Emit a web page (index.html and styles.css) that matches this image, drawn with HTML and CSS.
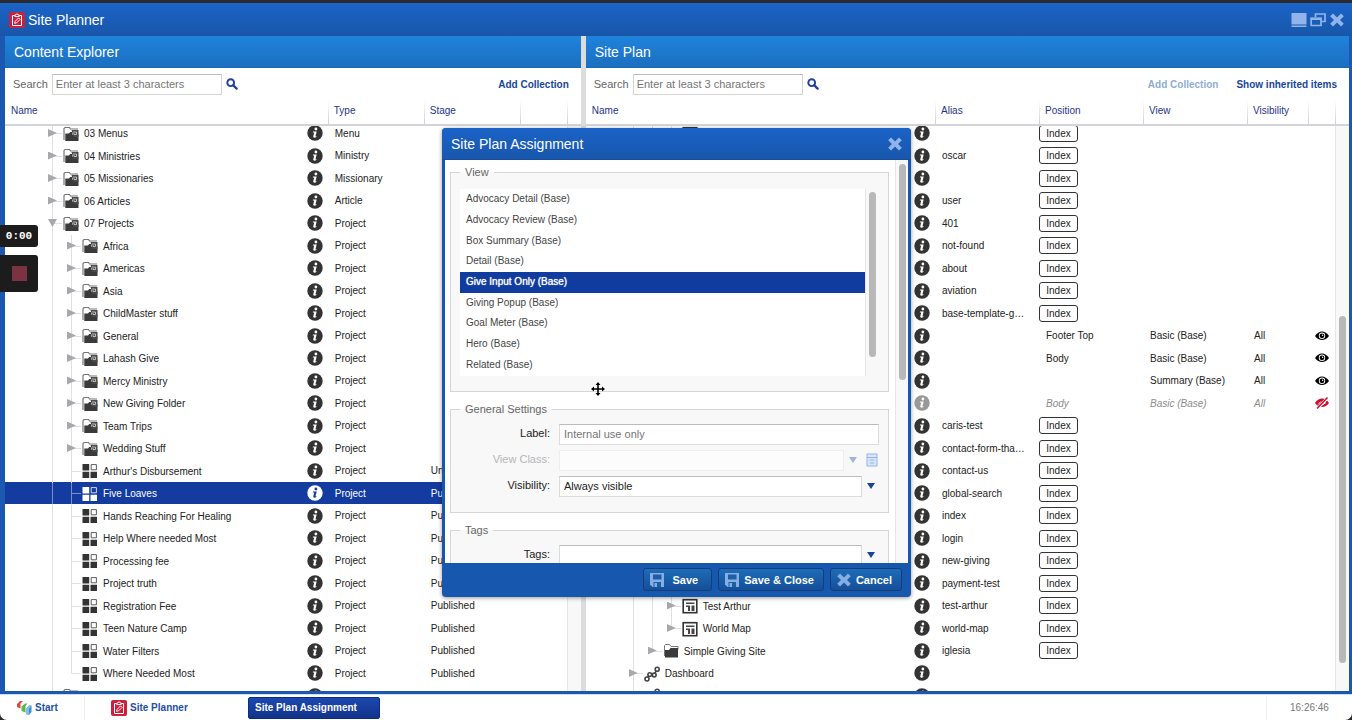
FILE: index.html
```
<!DOCTYPE html>
<html lang="en">
<head>
    <meta charset="UTF-8">
    <meta name="viewport" content="width=device-width, initial-scale=1.0">
    <title>Site Planner</title>
    <link rel="stylesheet" href="styles.css">
</head>
<body>
    <svg class="sprite" aria-hidden="true">
        <symbol id="planner" viewBox="0 0 16 16">
            <rect width="16" height="16" rx="2" fill="#c9203c"/>
            <path d="M5.5 3.5h-2v10h9v-10h-2M5.8 4.6V3h1.1a1.1 1.1 0 0 1 2.2 0h1.1v1.6z" fill="none" stroke="#fff"/>
            <path d="M5.6 11.3l.6-2 3.4-3.4 1.5 1.5-3.4 3.4z" fill="none" stroke="#fff" stroke-width=".9"/>
        </symbol>
        <symbol id="close" viewBox="0 0 16 16">
            <path d="M4 1.5L8 5.4l4-3.9L14.8 4.3 11 8l3.8 3.7L12 14.500 8 10.6l-4 3.900-2.800-2.800L5 8 1.200 4.300z" fill="currentColor"/>
        </symbol>
        <symbol id="minimize" viewBox="0 0 16 16">
            <path d="M.5 1h15v11.500H.5zM.5 13.500h15V15H.5z" fill="currentColor"/>
        </symbol>
        <symbol id="restore" viewBox="0 0 16 16">
            <path d="M5.500 5V2H15v7.500h-3.500M1.200 6.500h9.800v7H1.200z" fill="none" stroke="currentColor" stroke-width="1.700"/>
            <path d="M.5 5.500h11.300v2.500H.5z" fill="currentColor"/>
        </symbol>
        <symbol id="search" viewBox="0 0 12 12">
            <circle cx="4.700" cy="4.700" r="3.400" fill="none" stroke="currentColor" stroke-width="1.900"/>
            <path d="M7.200 7.200l3.400 3.400" stroke="currentColor" stroke-width="2.300" stroke-linecap="round"/>
        </symbol>
        <symbol id="info" viewBox="0 0 16 16">
            <circle cx="8" cy="8" r="7.700" fill="currentColor"/>
            <circle class="glyph" cx="8.900" cy="4" r="1.400"/>
            <path class="glyph" d="M6 6.500h3.700l-1.300 5 1.100-.400-.200.900c-1 .900-3.400 1.200-3-.700l.900-3.700-1.400-.200z"/>
        </symbol>
        <symbol id="folder" viewBox="0 0 16 16">
            <path d="M1.500 13V2.500L2.500 1.500h4l1.500 2h7v3" fill="none" stroke="#777"/>
            <path d="M2 7h4l1.500-2H15v9.500H2z" fill="#3a3a3a"/>
        </symbol>
        <symbol id="collection" viewBox="0 0 16 16">
            <path d="M1 14V2.500L2 1.500h4.500l1 1.500H15" fill="none" stroke="#777" stroke-width="1.200"/>
            <path d="M2.300 7.500H6L7.200 6H9v2.500h6.500V15H2.300z" fill="#3a3a3a"/>
            <path d="M8.500 4h7v7h-5z" fill="#4a4a4a"/>
            <path d="M11 5v3.500h2.500V6H12" fill="none" stroke="#d8d8d8" stroke-width=".8"/>
        </symbol>
        <symbol id="item" viewBox="0 0 16 16">
            <path d="M.5 1h6.700v6.500H.5zM.5 8.700h6.700V15H.5zM8.500 8.700H15V15H8.500z" fill="currentColor"/>
            <path class="item-slot" d="M9.200 1.600h5.200v5.200H9.200z" stroke="currentColor" stroke-width=".8"/>
        </symbol>
        <symbol id="page" viewBox="0 0 16 16">
            <rect x="1.200" y="1.700" width="13.600" height="13" fill="#fff" stroke="#333" stroke-width="1.600"/>
            <path d="M4 4.500h8.500V6H4zM4 7.500h4V9H4zM6 9h2v4H6zM9.500 7.500h3V13h-3z" fill="#444"/>
        </symbol>
        <symbol id="dashboard" viewBox="0 0 16 16">
            <path d="M3 12.500L5.500 8.500 10 9l3-5.500" fill="none" stroke="#444" stroke-width="1.600"/>
            <g fill="#fff" stroke="#444" stroke-width="1.600">
                <circle cx="3" cy="13" r="2"/><circle cx="5.800" cy="8.600" r="1.900"/>
                <circle cx="10.200" cy="9" r="1.900"/><circle cx="13.200" cy="3.200" r="2"/>
            </g>
        </symbol>
        <symbol id="eye" viewBox="0 0 16 16">
            <path d="M1 8c3.600-6 10.400-6 14 0-3.600 5.400-10.400 5.400-14 0z" fill="#000"/>
            <circle cx="8" cy="7.800" r="3.200" fill="#fff"/>
            <circle cx="8" cy="7.800" r="2.400" fill="#000"/>
            <circle cx="8.600" cy="7.200" r=".7" fill="#fff"/>
        </symbol>
        <symbol id="eye-off" viewBox="0 0 16 16">
            <path d="M1 8c3.600-6 10.400-6 14 0-3.600 5.400-10.400 5.400-14 0z" fill="#c8102e"/>
            <path d="M4 9.500l3-3M9 9.500l3-2" stroke="#fff"/>
            <path d="M3.500 13.500L14 2.500" stroke="#fff" stroke-width="3"/>
            <path d="M3 13.500L13.500 2.500" stroke="#c8102e" stroke-width="1.500"/>
        </symbol>
        <symbol id="disk" viewBox="0 0 16 16">
            <path d="M1 1h14v14H3.500L1 12.500z" fill="currentColor"/>
            <path d="M4 2.500h8.500v5H4zM4.500 10h7.500v5H4.500z" fill="#1b5fa6"/>
            <path d="M5.500 11h2.500v4H5.500z" fill="currentColor"/>
        </symbol>
        <symbol id="start" viewBox="0 0 16 16">
            <path d="M1 4l3-3h3L4.500 3.500v5L1 7z" fill="#e0483e"/>
            <path d="M5.500 6.500L9 3.500h2.500L9.500 6v6.500l-4-1.500z" fill="#5cb947"/>
            <path d="M10 9l3-3.500h2.500V12L13 15l-3-1z" fill="#3d8fd6"/>
            <path d="M10 9l3-3.500h2.500L13 8.500V15l-3-1z" fill="#7fc1ee"/>
        </symbol>
    </svg>

    <div class="screen">
        <main class="window">
            <header class="titlebar">
                <svg class="app-icon"><use href="#planner"/></svg>
                <h1>Site Planner</h1>
                <div class="window-tools">
                    <button aria-label="Minimize"><svg class="icon"><use href="#minimize"/></svg></button>
                    <button aria-label="Restore"><svg class="icon"><use href="#restore"/></svg></button>
                    <button aria-label="Close"><svg class="icon"><use href="#close"/></svg></button>
                </div>
            </header>

            <div class="panels">
                <section class="panel panel-explorer">
                    <h2>Content Explorer</h2>
                    <form class="toolbar">
                        <label for="search-content">Search</label>
                        <input id="search-content" type="text" placeholder="Enter at least 3 characters">
                        <button type="button" class="search-button" aria-label="Search"><svg><use href="#search"/></svg></button>
                        <a class="action" href="#">Add Collection</a>
                    </form>
                    <table class="grid grid-head">
                        <colgroup><col><col class="col-info"><col class="col-type"><col class="col-stage"><col class="col-extra"><col class="col-scroll"></colgroup>
                        <thead>
                            <tr><th colspan="2">Name</th><th>Type</th><th>Stage</th><th></th><th></th></tr>
                        </thead>
                    </table>
                    <div class="grid-body">
                        <div class="grid-clip">
                            <table class="grid">
                                <colgroup><col><col class="col-info"><col class="col-type"><col class="col-stage"><col class="col-extra"></colgroup>
                                <tbody>
                                    <tr><td><div class="node"><button class="guide closed" aria-label="Expand"></button><svg class="icon"><use href="#collection"/></svg>03 Menus</div></td><td><svg class="icon"><use href="#info"/></svg></td><td>Menu</td><td></td><td></td></tr>
                                    <tr><td><div class="node"><button class="guide closed" aria-label="Expand"></button><svg class="icon"><use href="#collection"/></svg>04 Ministries</div></td><td><svg class="icon"><use href="#info"/></svg></td><td>Ministry</td><td></td><td></td></tr>
                                    <tr><td><div class="node"><button class="guide closed" aria-label="Expand"></button><svg class="icon"><use href="#collection"/></svg>05 Missionaries</div></td><td><svg class="icon"><use href="#info"/></svg></td><td>Missionary</td><td></td><td></td></tr>
                                    <tr><td><div class="node"><button class="guide closed" aria-label="Expand"></button><svg class="icon"><use href="#collection"/></svg>06 Articles</div></td><td><svg class="icon"><use href="#info"/></svg></td><td>Article</td><td></td><td></td></tr>
                                    <tr><td><div class="node"><button class="guide open" aria-label="Collapse"></button><svg class="icon"><use href="#collection"/></svg>07 Projects</div></td><td><svg class="icon"><use href="#info"/></svg></td><td>Project</td><td></td><td></td></tr>
                                    <tr><td><div class="node"><span class="guide"></span><button class="guide closed" aria-label="Expand"></button><svg class="icon"><use href="#collection"/></svg>Africa</div></td><td><svg class="icon"><use href="#info"/></svg></td><td>Project</td><td></td><td></td></tr>
                                    <tr><td><div class="node"><span class="guide"></span><button class="guide closed" aria-label="Expand"></button><svg class="icon"><use href="#collection"/></svg>Americas</div></td><td><svg class="icon"><use href="#info"/></svg></td><td>Project</td><td></td><td></td></tr>
                                    <tr><td><div class="node"><span class="guide"></span><button class="guide closed" aria-label="Expand"></button><svg class="icon"><use href="#collection"/></svg>Asia</div></td><td><svg class="icon"><use href="#info"/></svg></td><td>Project</td><td></td><td></td></tr>
                                    <tr><td><div class="node"><span class="guide"></span><button class="guide closed" aria-label="Expand"></button><svg class="icon"><use href="#collection"/></svg>ChildMaster stuff</div></td><td><svg class="icon"><use href="#info"/></svg></td><td>Project</td><td></td><td></td></tr>
                                    <tr><td><div class="node"><span class="guide"></span><button class="guide closed" aria-label="Expand"></button><svg class="icon"><use href="#collection"/></svg>General</div></td><td><svg class="icon"><use href="#info"/></svg></td><td>Project</td><td></td><td></td></tr>
                                    <tr><td><div class="node"><span class="guide"></span><button class="guide closed" aria-label="Expand"></button><svg class="icon"><use href="#collection"/></svg>Lahash Give</div></td><td><svg class="icon"><use href="#info"/></svg></td><td>Project</td><td></td><td></td></tr>
                                    <tr><td><div class="node"><span class="guide"></span><button class="guide closed" aria-label="Expand"></button><svg class="icon"><use href="#collection"/></svg>Mercy Ministry</div></td><td><svg class="icon"><use href="#info"/></svg></td><td>Project</td><td></td><td></td></tr>
                                    <tr><td><div class="node"><span class="guide"></span><button class="guide closed" aria-label="Expand"></button><svg class="icon"><use href="#collection"/></svg>New Giving Folder</div></td><td><svg class="icon"><use href="#info"/></svg></td><td>Project</td><td></td><td></td></tr>
                                    <tr><td><div class="node"><span class="guide"></span><button class="guide closed" aria-label="Expand"></button><svg class="icon"><use href="#collection"/></svg>Team Trips</div></td><td><svg class="icon"><use href="#info"/></svg></td><td>Project</td><td></td><td></td></tr>
                                    <tr><td><div class="node"><span class="guide"></span><button class="guide closed" aria-label="Expand"></button><svg class="icon"><use href="#collection"/></svg>Wedding Stuff</div></td><td><svg class="icon"><use href="#info"/></svg></td><td>Project</td><td></td><td></td></tr>
                                    <tr><td><div class="node"><span class="guide"></span><span class="guide branch"></span><svg class="icon"><use href="#item"/></svg>Arthur's Disbursement</div></td><td><svg class="icon"><use href="#info"/></svg></td><td>Project</td><td>Unpublished</td><td></td></tr>
                                    <tr class="selected"><td><div class="node"><span class="guide"></span><span class="guide branch"></span><svg class="icon"><use href="#item"/></svg>Five Loaves</div></td><td><svg class="icon"><use href="#info"/></svg></td><td>Project</td><td>Published</td><td></td></tr>
                                    <tr><td><div class="node"><span class="guide"></span><span class="guide branch"></span><svg class="icon"><use href="#item"/></svg>Hands Reaching For Healing</div></td><td><svg class="icon"><use href="#info"/></svg></td><td>Project</td><td>Published</td><td></td></tr>
                                    <tr><td><div class="node"><span class="guide"></span><span class="guide branch"></span><svg class="icon"><use href="#item"/></svg>Help Where needed Most</div></td><td><svg class="icon"><use href="#info"/></svg></td><td>Project</td><td>Published</td><td></td></tr>
                                    <tr><td><div class="node"><span class="guide"></span><span class="guide branch"></span><svg class="icon"><use href="#item"/></svg>Processing fee</div></td><td><svg class="icon"><use href="#info"/></svg></td><td>Project</td><td>Published</td><td></td></tr>
                                    <tr><td><div class="node"><span class="guide"></span><span class="guide branch"></span><svg class="icon"><use href="#item"/></svg>Project truth</div></td><td><svg class="icon"><use href="#info"/></svg></td><td>Project</td><td>Published</td><td></td></tr>
                                    <tr><td><div class="node"><span class="guide"></span><span class="guide branch"></span><svg class="icon"><use href="#item"/></svg>Registration Fee</div></td><td><svg class="icon"><use href="#info"/></svg></td><td>Project</td><td>Published</td><td></td></tr>
                                    <tr><td><div class="node"><span class="guide"></span><span class="guide branch"></span><svg class="icon"><use href="#item"/></svg>Teen Nature Camp</div></td><td><svg class="icon"><use href="#info"/></svg></td><td>Project</td><td>Published</td><td></td></tr>
                                    <tr><td><div class="node"><span class="guide"></span><span class="guide branch"></span><svg class="icon"><use href="#item"/></svg>Water Filters</div></td><td><svg class="icon"><use href="#info"/></svg></td><td>Project</td><td>Published</td><td></td></tr>
                                    <tr><td><div class="node"><span class="guide"></span><span class="guide branch last"></span><svg class="icon"><use href="#item"/></svg>Where Needed Most</div></td><td><svg class="icon"><use href="#info"/></svg></td><td>Project</td><td>Published</td><td></td></tr>
                                    <tr><td><div class="node"><button class="guide closed" aria-label="Expand"></button><svg class="icon"><use href="#collection"/></svg></div></td><td><svg class="icon"><use href="#info"/></svg></td><td></td><td></td><td></td></tr>
                                </tbody>
                            </table>
                        </div>
                        <div class="scrollbar"></div>
                    </div>
                </section>

                <div class="splitter"></div>

                <section class="panel panel-plan">
                    <h2>Site Plan</h2>
                    <form class="toolbar">
                        <label for="search-plan">Search</label>
                        <input id="search-plan" type="text" placeholder="Enter at least 3 characters">
                        <button type="button" class="search-button" aria-label="Search"><svg><use href="#search"/></svg></button>
                        <a class="action disabled" href="#">Add Collection</a>
                        <a class="action" href="#">Show inherited items</a>
                    </form>
                    <table class="grid grid-head">
                        <colgroup><col><col class="col-info"><col class="col-wide"><col class="col-wide"><col class="col-wide"><col class="col-visibility"><col class="col-info"><col class="col-scroll"></colgroup>
                        <thead>
                            <tr><th colspan="2">Name</th><th>Alias</th><th>Position</th><th>View</th><th>Visibility</th><th></th><th></th></tr>
                        </thead>
                    </table>
                    <div class="grid-body">
                        <div class="grid-clip">
                            <table class="grid">
                                <colgroup><col><col class="col-info"><col class="col-wide"><col class="col-wide"><col class="col-wide"><col class="col-visibility"><col class="col-info"></colgroup>
                                <tbody>
                                    <tr><td><div class="node"><span class="guide"></span><span class="guide"></span><button class="guide closed" aria-label="Expand"></button><svg class="icon"><use href="#page"/></svg></div></td><td><svg class="icon"><use href="#info"/></svg></td><td></td><td><button class="index">Index</button></td><td></td><td></td><td></td></tr>
                                    <tr><td></td><td><svg class="icon"><use href="#info"/></svg></td><td>oscar</td><td><button class="index">Index</button></td><td></td><td></td><td></td></tr>
                                    <tr><td></td><td><svg class="icon"><use href="#info"/></svg></td><td></td><td><button class="index">Index</button></td><td></td><td></td><td></td></tr>
                                    <tr><td></td><td><svg class="icon"><use href="#info"/></svg></td><td>user</td><td><button class="index">Index</button></td><td></td><td></td><td></td></tr>
                                    <tr><td></td><td><svg class="icon"><use href="#info"/></svg></td><td>401</td><td><button class="index">Index</button></td><td></td><td></td><td></td></tr>
                                    <tr><td></td><td><svg class="icon"><use href="#info"/></svg></td><td>not-found</td><td><button class="index">Index</button></td><td></td><td></td><td></td></tr>
                                    <tr><td></td><td><svg class="icon"><use href="#info"/></svg></td><td>about</td><td><button class="index">Index</button></td><td></td><td></td><td></td></tr>
                                    <tr><td></td><td><svg class="icon"><use href="#info"/></svg></td><td>aviation</td><td><button class="index">Index</button></td><td></td><td></td><td></td></tr>
                                    <tr><td></td><td><svg class="icon"><use href="#info"/></svg></td><td>base-template-g…</td><td><button class="index">Index</button></td><td></td><td></td><td></td></tr>
                                    <tr><td></td><td><svg class="icon"><use href="#info"/></svg></td><td></td><td>Footer Top</td><td>Basic (Base)</td><td>All</td><td><svg class="icon"><use href="#eye"/></svg></td></tr>
                                    <tr><td></td><td><svg class="icon"><use href="#info"/></svg></td><td></td><td>Body</td><td>Basic (Base)</td><td>All</td><td><svg class="icon"><use href="#eye"/></svg></td></tr>
                                    <tr><td></td><td><svg class="icon"><use href="#info"/></svg></td><td></td><td></td><td>Summary (Base)</td><td>All</td><td><svg class="icon"><use href="#eye"/></svg></td></tr>
                                    <tr class="inactive"><td></td><td><svg class="icon"><use href="#info"/></svg></td><td></td><td>Body</td><td>Basic (Base)</td><td>All</td><td><svg class="icon"><use href="#eye-off"/></svg></td></tr>
                                    <tr><td></td><td><svg class="icon"><use href="#info"/></svg></td><td>caris-test</td><td><button class="index">Index</button></td><td></td><td></td><td></td></tr>
                                    <tr><td></td><td><svg class="icon"><use href="#info"/></svg></td><td>contact-form-tha…</td><td><button class="index">Index</button></td><td></td><td></td><td></td></tr>
                                    <tr><td></td><td><svg class="icon"><use href="#info"/></svg></td><td>contact-us</td><td><button class="index">Index</button></td><td></td><td></td><td></td></tr>
                                    <tr><td></td><td><svg class="icon"><use href="#info"/></svg></td><td>global-search</td><td><button class="index">Index</button></td><td></td><td></td><td></td></tr>
                                    <tr><td></td><td><svg class="icon"><use href="#info"/></svg></td><td>index</td><td><button class="index">Index</button></td><td></td><td></td><td></td></tr>
                                    <tr><td></td><td><svg class="icon"><use href="#info"/></svg></td><td>login</td><td><button class="index">Index</button></td><td></td><td></td><td></td></tr>
                                    <tr><td></td><td><svg class="icon"><use href="#info"/></svg></td><td>new-giving</td><td><button class="index">Index</button></td><td></td><td></td><td></td></tr>
                                    <tr><td></td><td><svg class="icon"><use href="#info"/></svg></td><td>payment-test</td><td><button class="index">Index</button></td><td></td><td></td><td></td></tr>
                                    <tr><td><div class="node"><span class="guide"></span><span class="guide"></span><button class="guide closed" aria-label="Expand"></button><svg class="icon"><use href="#page"/></svg>Test Arthur</div></td><td><svg class="icon"><use href="#info"/></svg></td><td>test-arthur</td><td><button class="index">Index</button></td><td></td><td></td><td></td></tr>
                                    <tr><td><div class="node"><span class="guide"></span><span class="guide"></span><button class="guide closed last" aria-label="Expand"></button><svg class="icon"><use href="#page"/></svg>World Map</div></td><td><svg class="icon"><use href="#info"/></svg></td><td>world-map</td><td><button class="index">Index</button></td><td></td><td></td><td></td></tr>
                                    <tr><td><div class="node"><span class="guide"></span><button class="guide closed last" aria-label="Expand"></button><svg class="icon"><use href="#folder"/></svg>Simple Giving Site</div></td><td><svg class="icon"><use href="#info"/></svg></td><td>iglesia</td><td><button class="index">Index</button></td><td></td><td></td><td></td></tr>
                                    <tr><td><div class="node"><button class="guide closed" aria-label="Expand"></button><svg class="icon"><use href="#dashboard"/></svg>Dashboard</div></td><td><svg class="icon"><use href="#info"/></svg></td><td></td><td></td><td></td><td></td><td></td></tr>
                                    <tr><td><div class="node"><button class="guide closed" aria-label="Expand"></button><svg class="icon"><use href="#dashboard"/></svg></div></td><td><svg class="icon"><use href="#info"/></svg></td><td></td><td></td><td></td><td></td><td></td></tr>
                                </tbody>
                            </table>
                        </div>
                        <div class="scrollbar scrollbar-plan"><div class="thumb"></div></div>
                    </div>
                </section>
            </div>
        </main>

        <footer class="taskbar">
            <button class="task task-start"><svg class="icon"><use href="#start"/></svg>Start</button>
            <button class="task task-planner"><svg class="icon"><use href="#planner"/></svg>Site Planner</button>
            <button class="task task-active">Site Plan Assignment</button>
            <time class="clock">16:26:46</time>
        </footer>
    </div>

    <div class="dialog" role="dialog" aria-labelledby="dialog-title">
        <header class="dialog-header">
            <h2 id="dialog-title">Site Plan Assignment</h2>
            <button class="dialog-close" aria-label="Close"><svg class="icon"><use href="#close"/></svg></button>
        </header>
        <div class="dialog-body">
            <form class="dialog-form">
                <fieldset class="view-fields">
                    <legend>View</legend>
                    <select size="9" aria-label="View">
                        <option>Advocacy Detail (Base)</option>
                        <option>Advocacy Review (Base)</option>
                        <option>Box Summary (Base)</option>
                        <option>Detail (Base)</option>
                        <option selected>Give Input Only (Base)</option>
                        <option>Giving Popup (Base)</option>
                        <option>Goal Meter (Base)</option>
                        <option>Hero (Base)</option>
                        <option>Related (Base)</option>
                    </select>
                    <div class="scrollbar scrollbar-view"><div class="thumb"></div></div>
                </fieldset>
                <fieldset>
                    <legend>General Settings</legend>
                    <div class="field">
                        <label for="label">Label:</label>
                        <input id="label" type="text" placeholder="Internal use only">
                    </div>
                    <div class="field field-disabled">
                        <label for="view-class">View Class:</label>
                        <select id="view-class" disabled><option></option></select>
                        <span class="caret"></span>
                        <svg class="field-icon" viewBox="0 0 12 14"><path d="M1 1h10v12H1zM1 4.500h10M3.500 7h5M3.500 10h5" fill="#dbe8fb" stroke="#8fb3e6"/></svg>
                    </div>
                    <div class="field">
                        <label for="visibility">Visibility:</label>
                        <select id="visibility"><option>Always visible</option></select>
                        <span class="caret"></span>
                    </div>
                </fieldset>
                <fieldset>
                    <legend>Tags</legend>
                    <div class="field">
                        <label for="tags">Tags:</label>
                        <select id="tags"><option></option></select>
                        <span class="caret"></span>
                    </div>
                </fieldset>
            </form>
            <div class="scrollbar scrollbar-dialog"><div class="thumb"></div></div>
        </div>
        <footer class="dialog-footer">
            <button class="button button-save"><svg class="icon"><use href="#disk"/></svg>Save</button>
            <button class="button"><svg class="icon"><use href="#disk"/></svg>Save &amp; Close</button>
            <button class="button"><svg class="icon"><use href="#close"/></svg>Cancel</button>
        </footer>
    </div>

    <div class="recorder">
        <div class="recorder-time">0:00</div>
        <button class="recorder-stop" aria-label="Stop recording"></button>
    </div>

    <svg class="cursor" viewBox="0 0 16 16" aria-hidden="true">
        <path d="M8 1l2.500 3H8.800v3.200H12V5.500L15 8l-3 2.500V8.800H8.800V12h1.700L8 15l-2.500-3h1.700V8.800H4v1.700L1 8l3-2.500v1.700h3.200V4H5.500z" fill="#000" stroke="#fff" stroke-width=".8" paint-order="stroke"/>
    </svg>
</body>
</html>
```

FILE: styles.css
```
* {
    box-sizing: border-box;
}
body {
    font-family: "Liberation Sans", Arial, sans-serif;
    font-size: 10px;
    color: #222;
    margin: 0;
    background-color: #2b2b2e;
}
button, input, select {
    font: inherit;
    color: inherit;
    margin: 0;
    padding: 0;
    border: none;
    border-radius: 0;
    background: none;
    outline: none;
}
h1, h2 {
    margin: 0;
    font-size: 14px;
    font-weight: normal;
    color: #fff;
}
a {
    text-decoration: none;
}
.sprite {
    display: none;
}
.icon {
    display: block;
    flex: none;
    width: 16px;
    height: 16px;
}
.screen {
    display: flex;
    flex-direction: column;
    height: 100vh;
    padding-top: 3px;
}

/* main window */
.window {
    flex: 1;
    min-height: 0;
    display: flex;
    flex-direction: column;
    padding: 0 3px 3px 5px;
    background: #1c58b0;
}
.titlebar {
    display: flex;
    align-items: center;
    flex: none;
    height: 33px;
    margin: 0 -3px 0 -5px;
    padding: 0 7px 0 9px;
    background: linear-gradient(#1b64c8, #1856a9);
}
.app-icon {
    width: 16px;
    height: 16px;
    margin-right: 3px;
}
.window-tools {
    display: flex;
    gap: 3px;
    margin-left: auto;
    color: #92b4ea;
}
.panels {
    flex: 1;
    min-height: 0;
    display: flex;
    background: #fff;
}
.panel {
    display: flex;
    flex-direction: column;
    min-width: 0;
}
.panel-explorer {
    flex: 43 1 0;
}
.panel-plan {
    flex: 57 1 0;
}
.panel h2 {
    flex: none;
    height: 32px;
    padding: 0 9px;
    line-height: 32px;
    background: linear-gradient(#1f83dc, #1b6fc0);
    border-bottom: 1px solid #1a67b8;
}
.splitter {
    width: 5px;
    background: #dcdcdf;
}
.toolbar {
    display: flex;
    align-items: center;
    flex: none;
    height: 32px;
    padding: 0 12px 0 8px;
    font-size: 11px;
    color: #666;
}
.toolbar input {
    width: 170px;
    height: 21px;
    margin: 0 4px;
    padding: 0 3px;
    border: 1px solid #d5d5d5;
    border-top-color: #bbb;
}
::placeholder {
    color: #757575;
    opacity: 1;
}
.search-button {
    color: #1d3fa0;
}
.search-button svg {
    display: block;
    width: 12px;
    height: 12px;
}
.action {
    margin-left: 18px;
    font-size: 10px;
    font-weight: bold;
    color: #17469a;
}
.search-button + .action {
    margin-left: auto;
}
.action.disabled {
    color: #8facd4;
}

/* grids */
.grid {
    width: 100%;
    table-layout: fixed;
    border-collapse: collapse;
}
.col-info {
    width: 27px;
}
.col-type,
.col-stage {
    width: 96px;
}
.col-extra {
    width: 47px;
}
.col-wide {
    width: 104px;
}
.col-visibility {
    width: 61px;
}
.col-scroll {
    width: 14px;
}
.grid-head {
    flex: none;
    border-bottom: 2px solid #d3d3d8;
}
.grid-head th {
    height: 25px;
    padding: 0 6px 4px;
    font-weight: normal;
    text-align: left;
    color: #25338c;
    background: linear-gradient(#fff, #d0d0d6) left / 1px 100% no-repeat;
}
.grid-head th:first-child {
    background: none;
}
.grid-body {
    flex: 1;
    min-height: 0;
    display: flex;
}
.grid-clip {
    flex: 1;
    min-width: 0;
    overflow: hidden;
}
/* list is scrolled part way into its first row */
.grid-clip .grid {
    margin-top: -4px;
}
.grid tr {
    height: 22px;
}
.grid tr:nth-child(even) {
    height: 23px;
}
.grid td {
    height: inherit;
    padding: 0 0 0 7px;
    white-space: nowrap;
    color: #222;
}
.grid td:first-child,
.grid td:has(.index) {
    padding: 0;
}
.grid td .icon {
    color: #333;
}
.grid td > .icon {
    margin-left: -1px;
}
.glyph,
.item-slot {
    fill: var(--row-color, #fff);
}
.node {
    display: flex;
    align-items: center;
    height: 23px;
    margin-bottom: -1px;
    padding-left: 38px;
}
.node .icon {
    margin: 0 5px 0 1px;
}
.guide {
    position: relative;
    flex: none;
    width: 19px;
    height: 100%;
    background: linear-gradient(#e0e0e4, #e0e0e4) 9px 0 / 1px 100% no-repeat;
}
.branch,
.closed,
.open {
    background: linear-gradient(#e0e0e4, #e0e0e4) 9px 0 / 1px 100% no-repeat,
        linear-gradient(#e0e0e4, #e0e0e4) 9px 11px / 10px 1px no-repeat;
}
.last {
    background-size: 1px 50%, 10px 1px;
}
.closed::after,
.open::after {
    content: "";
    position: absolute;
    left: 5px;
    top: 7px;
    width: 9px;
    height: 8px;
    background: #a8a8ac;
    clip-path: polygon(0 0, 100% 50%, 0 100%);
}
.open::after {
    clip-path: polygon(0 0, 100% 0, 50% 100%);
}
.grid .selected {
    --row-color: #143b9f;
    background: var(--row-color);
}
.grid .selected td,
.grid .selected .icon {
    color: #fff;
}
.selected .guide {
    opacity: .5;
}
.grid .inactive td {
    font-style: italic;
    color: #8c8c8c;
}
.grid .inactive .icon {
    color: #999;
}
.index {
    display: block;
    width: 39px;
    height: 17px;
    border: 1px solid #333;
    border-radius: 3px;
    background: #fff;
}

/* scrollbars */
.scrollbar {
    flex: none;
    width: 14px;
    background: #f8f8f8;
    border-left: 1px solid #e6e6e8;
}
.thumb {
    width: 7px;
    margin: 4px auto 0;
    border-radius: 4px;
    background: #b8b8b8;
}
.scrollbar-plan .thumb {
    height: 347px;
    margin-top: 190px;
}

/* taskbar */
.taskbar {
    display: flex;
    align-items: center;
    flex: none;
    height: 26px;
    background: #fff;
    border-top: 1px solid #cfe0f4;
    border-radius: 0 0 7px 7px;
    font-weight: bold;
    color: #24509f;
}
.task {
    display: flex;
    align-items: center;
    gap: 3px;
}
.task-start {
    width: 85px;
    height: 24px;
    padding-left: 16px;
    border-right: 1px solid #eee;
}
.task-planner {
    width: 163px;
    padding-left: 26px;
}
.task-active {
    width: 132px;
    height: 22px;
    padding-left: 6px;
    color: #fff;
    background: linear-gradient(#1b49b0, #12338a);
    border: 1px solid #102c78;
    border-radius: 2px;
}
.clock {
    margin-left: auto;
    width: 86px;
    line-height: 24px;
    padding-left: 23px;
    border-left: 1px solid #eee;
    font-weight: normal;
    color: #777;
}

/* dialog */
.dialog {
    position: absolute;
    top: 128px;
    left: calc(50% - 234px);
    display: flex;
    flex-direction: column;
    width: 469px;
    height: 469px;
    padding: 0 3px;
    border-radius: 4px;
    background: #1857ae;
    box-shadow: 0 1px 4px rgba(0, 0, 0, 0.4);
}
.dialog-header {
    display: flex;
    align-items: center;
    justify-content: space-between;
    flex: none;
    height: 32px;
    margin: 0 -3px;
    padding: 0 8px 0 9px;
    border-radius: 4px 4px 0 0;
    border-bottom: 1px solid #164e9c;
    background: linear-gradient(#1b63c8, #1857ac);
}
.dialog-close {
    color: #92b4ea;
}
.dialog-body {
    flex: 1;
    min-height: 0;
    display: flex;
    background: #fff;
    overflow: hidden;
}
.dialog-form {
    flex: 1;
    padding: 5px 6px 0 5px;
    font-size: 11px;
}
.scrollbar-dialog .thumb {
    height: 216px;
}
fieldset {
    margin: 0 0 10px;
    padding: 4px 9px 13px;
    border: 1px solid #d5d5d8;
    background: #f8f8f8;
}
legend {
    padding: 0 5px;
    line-height: 15px;
    color: #666;
}
fieldset .field {
    display: flex;
    align-items: center;
    height: 26px;
}
.view-fields {
    display: flex;
    padding: 9px 9px 15px;
}
.view-fields select {
    flex: 1;
    height: 187px;
    overflow: hidden;
    background: #fff;
    font-size: 10px;
}
.view-fields option {
    height: 21px;
    min-height: 0;
    padding: 4px 6px 0;
    color: #444;
}
.view-fields option:nth-child(3n) {
    height: 20px;
}
.view-fields option:checked {
    background: #103c9f linear-gradient(#103c9f, #103c9f);
    color: #fff;
    text-shadow: 0 0 1px #fff;
}
.scrollbar-view .thumb {
    height: 165px;
    margin-top: 3px;
}
.field label {
    width: 90px;
    margin: 0 9px 3px 0;
    text-align: right;
}
.field input,
.field select {
    flex: none;
    appearance: none;
    width: 303px;
    height: 21px;
    padding: 0 4px;
    background: #fff;
    border: 1px solid #dcdcdc;
    border-top-color: #bbb;
}
.field input {
    width: 320px;
}
.caret {
    width: 8px;
    height: 6px;
    margin-left: 5px;
    background: #1b429c;
    clip-path: polygon(0 0, 100% 0, 50% 100%);
}
.field-disabled {
    color: #b5b5b8;
}
.field-disabled select {
    width: 285px;
    background: #fcfcfc;
    border-color: #eee;
    opacity: 1;
}
.field-disabled .caret {
    background: #a5b4dc;
}
.field-icon {
    width: 12px;
    height: 14px;
    margin-left: 9px;
}
.dialog-footer {
    display: flex;
    justify-content: flex-end;
    gap: 6px;
    flex: none;
    height: 34px;
    padding: 5px 6px;
}
.button {
    display: flex;
    align-items: center;
    gap: 4px;
    height: 23px;
    padding: 0 9px 0 5px;
    font-size: 11px;
    font-weight: bold;
    color: #fff;
    background: linear-gradient(#1d6cb8, #164f98);
    border: 1px solid #123f7c;
    border-radius: 3px;
}
.button-save {
    gap: 8px;
    padding-right: 13px;
}
.button .icon {
    color: #86aee4;
}

/* screen recorder overlay */
.recorder {
    position: absolute;
    top: 225px;
    left: 0;
    width: 38px;
}
.recorder-time {
    margin-bottom: 8px;
    border-radius: 0 3px 3px 0;
    background: #1c1c1c;
    color: #fff;
    font: bold 11px/22px "Liberation Mono", monospace;
    text-align: center;
}
.recorder-stop {
    display: grid;
    place-items: center;
    width: 38px;
    height: 37px;
    border-radius: 0 3px 3px 0;
    background: #1c1c1c;
}
.recorder-stop::before {
    content: "";
    width: 15px;
    height: 15px;
    background: #7b3242;
}
.cursor {
    position: absolute;
    top: 381px;
    left: 590px;
    width: 16px;
    height: 16px;
}
```
